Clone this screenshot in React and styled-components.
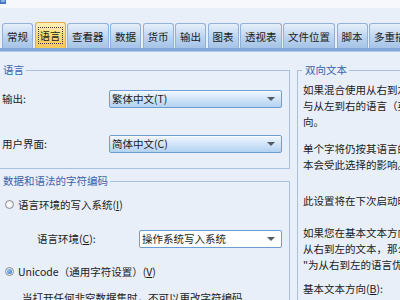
import React from "react";
import styled, { createGlobalStyle, css } from "styled-components";

const GlobalStyle = createGlobalStyle`
  html, body {
    margin: 0;
    padding: 0;
    background: #e8eff9;
  }
  body {
    font-family: "Noto Sans CJK SC", "Noto Sans", sans-serif;
    font-size: 10.5px;
    color: #1b1b1b;
  }
`;

const Window = styled.div`
  width: 400px;
  height: 300px;
  overflow: hidden;
  background: #e8eff9;
`;

const TopStrip = styled.div`
  height: 8px;
  background: #f6f8fc;
  display: flex;
  align-items: flex-start;
`;

const TabBar = styled.div`
  display: flex;
  align-items: flex-end;
  gap: 1.5px;
  padding: 14px 0 0 2px;
  height: 26px;
  white-space: nowrap;
`;

const Tab = styled.div`
  flex: none;
  height: 24px;
  padding: 0 4px;
  display: flex;
  align-items: center;
  line-height: 13px;
  border: 1px solid #90b1da;
  border-bottom: none;
  border-radius: 3px 3px 0 0;
  background: linear-gradient(#e6effa, #bcd4ef 55%, #a6c3e6);
  color: #1b1b1b;
  ${(p) =>
    p.$active &&
    css`
      height: 25px;
      border-color: #e2ad45;
      background: linear-gradient(#fff0bd, #fbd976 50%, #f6c957);
      span {
        outline: 1px dotted #3a3a3a;
        outline-offset: 1px;
      }
    `}
`;

const TabRule = styled.div`
  height: 3px;
  background: #80a7d7;
  border-bottom: 1px solid #b4cde9;
`;

const Content = styled.div`
  display: grid;
  grid-template-columns: 290px 1fr;
  gap: 7px;
  padding-top: 11px;
`;

const Column = styled.div`
  display: flex;
  flex-direction: column;
`;

const GroupHead = styled.div`
  display: flex;
  align-items: center;
  height: 14px;
  ${(p) => p.$spaced && "margin-top: 5px;"}
`;

const GroupLabel = styled.span`
  color: #3a62ad;
  line-height: 14px;
  padding: 0 2px 0 3px;
  white-space: nowrap;
`;

const GroupLine = styled.div`
  flex: 1;
  height: 1px;
  background: #a9c1df;
  ${(p) => p.$lead && "flex: none; width: 5px;"}
`;

const GroupBody = styled.div`
  border-right: 1px solid #a9c1df;
  border-bottom: 1px solid #a9c1df;
  margin-top: -7px;
  padding: ${(p) => p.$pad || "19px 0 15px"};
  display: flex;
  flex-direction: column;
`;

const SideBody = styled.div`
  border-left: 1px solid #a9c1df;
  margin-top: -7px;
  padding: 12px 0 0 5px;
  height: 240px;
`;

const FormRow = styled.div`
  display: flex;
  align-items: center;
  height: 19px;
  padding-left: ${(p) => p.$indent || 2}px;
  margin-top: ${(p) => p.$top || 0}px;
`;

const FieldLabel = styled.span`
  width: ${(p) => p.$w}px;
  flex: none;
  white-space: nowrap;
`;

const Combo = styled.div`
  flex: none;
  width: ${(p) => p.$w}px;
  height: 18px;
  box-sizing: border-box;
  border: 1px solid #6c9dd3;
  border-radius: 2px;
  display: flex;
  align-items: center;
  justify-content: space-between;
  padding: 0 6px 0 2px;
  background: ${(p) =>
    p.$plain ? "#ffffff" : "linear-gradient(#f1f7fe, #d4e6f9 45%, #b3d2f1)"};
  box-shadow: inset 0 1px 0 rgba(255, 255, 255, 0.7);
  white-space: nowrap;
`;

const Arrow = styled.span`
  width: 0;
  height: 0;
  border-left: 4px solid transparent;
  border-right: 4px solid transparent;
  border-top: 4px solid #555c66;
`;

const RadioRow = styled.div`
  display: flex;
  align-items: center;
  gap: 4px;
  height: 16px;
  padding-left: 5px;
  margin-top: ${(p) => p.$top || 0}px;
  white-space: nowrap;
`;

const Radio = styled.span`
  width: 9px;
  height: 9px;
  box-sizing: border-box;
  border-radius: 50%;
  border: 1px solid #8a8f96;
  background: radial-gradient(circle, #ffffff 30%, #d6d9de 100%);
  display: flex;
  align-items: center;
  justify-content: center;
  flex: none;
  ${(p) =>
    p.$checked &&
    css`
      &::after {
        content: "";
        width: 5px;
        height: 5px;
        border-radius: 50%;
        background: radial-gradient(circle at 35% 35%, #8fc0f2, #2b6fc2);
      }
    `}
`;

const Note = styled.div`
  padding-left: 22px;
  margin-top: 11px;
  height: 16px;
  line-height: 16px;
  white-space: nowrap;
`;

const Para = styled.div`
  line-height: 16px;
  white-space: nowrap;
  margin-top: ${(p) => p.$top || 0}px;
`;

const Key = styled.u`
  text-underline-offset: 1px;
`;

const tabs = ["常规", "语言", "查看器", "数据", "货币", "输出", "图表", "透视表", "文件位置", "脚本", "多重插补"];

export default function App() {
  return (
    <Window>
      <GlobalStyle />
      <TopStrip>
        <svg width="7" height="5" viewBox="0 0 7 5">
          <rect x="0" y="0" width="6" height="4" fill="#4a78c0" />
          <rect x="1" y="0" width="4" height="2" fill="#8db3e6" />
        </svg>
      </TopStrip>
      <TabBar>
        {tabs.map((t) => (
          <Tab key={t} $active={t === "语言"}>
            <span>{t}</span>
          </Tab>
        ))}
      </TabBar>
      <TabRule />
      <Content>
        <Column>
          <GroupHead>
            <GroupLabel>语言</GroupLabel>
            <GroupLine />
          </GroupHead>
          <GroupBody>
            <FormRow>
              <FieldLabel $w={107}>输出:</FieldLabel>
              <Combo $w={173}>
                <span>繁体中文(T)</span>
                <Arrow />
              </Combo>
            </FormRow>
            <FormRow $top={26}>
              <FieldLabel $w={107}>用户界面:</FieldLabel>
              <Combo $w={173}>
                <span>简体中文(C)</span>
                <Arrow />
              </Combo>
            </FormRow>
          </GroupBody>
          <GroupHead $spaced>
            <GroupLabel>数据和语法的字符编码</GroupLabel>
            <GroupLine />
          </GroupHead>
          <GroupBody $pad="15px 0 0">
            <RadioRow>
              <Radio />
              <span>
                语言环境的写入系统(<Key>I</Key>)
              </span>
            </RadioRow>
            <FormRow $indent={37} $top={17}>
              <FieldLabel $w={102}>
                语言环境(<Key>C</Key>):
              </FieldLabel>
              <Combo $w={143} $plain>
                <span>操作系统写入系统</span>
                <Arrow />
              </Combo>
            </FormRow>
            <RadioRow $top={15}>
              <Radio $checked />
              <span>
                Unicode（通用字符设置）(<Key>V</Key>)
              </span>
            </RadioRow>
            <Note>当打开任何非空数据集时，不可以更改字符编码</Note>
          </GroupBody>
        </Column>
        <Column>
          <GroupHead>
            <GroupLine $lead />
            <GroupLabel>双向文本</GroupLabel>
            <GroupLine />
          </GroupHead>
          <SideBody>
            <Para>如果混合使用从右到左的语言（例如阿拉伯语）</Para>
            <Para>与从左到右的语言（英语），请选择基本文本方</Para>
            <Para>向。</Para>
            <Para $top={11}>单个字将仍按其语言的正确方向显示，只有基</Para>
            <Para>本会受此选择的影响。</Para>
            <Para $top={20}>此设置将在下次启动时生效。</Para>
            <Para $top={16}>如果您在基本文本方向中选择自动，则如果</Para>
            <Para>从右到左的文本，那么将自动选择</Para>
            <Para>"为从右到左的语言优化"。</Para>
            <Para $top={8}>
              基本文本方向(<Key>B</Key>):
            </Para>
          </SideBody>
        </Column>
      </Content>
    </Window>
  );
}
